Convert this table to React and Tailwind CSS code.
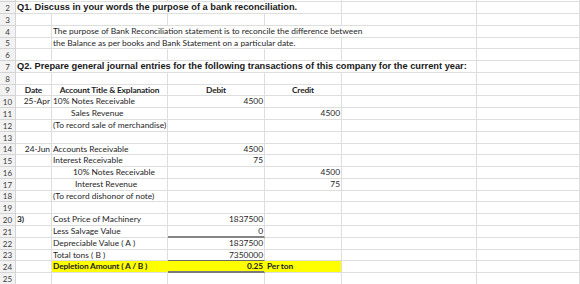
const GRID = 'grid grid-cols-[16px_36px_116px_97px_77px_135px_103px]';
const LINE = 'border-r border-b border-[#dedede]';

const Q = "font-[family-name:'Liberation_Sans',Arial,sans-serif] font-bold text-[9.25px] text-[#1a1a1a] pl-[1px]";
const B = 'font-bold tracking-[-0.15px]';

function Cell({ span = '', className = '', children }) {
    return (
        <div className={`${span} ${LINE} flex items-center whitespace-nowrap overflow-visible ${className}`}>
            {children}
        </div>
    );
}

function Row({ n, h, children }) {
    return (
        <div className={`${GRID} ${h}`}>
            <div className="bg-[#f2f2f2] border-r border-b border-[#d4d4d4] flex items-center justify-center text-[8px] text-[#3a3a3a]">
                {n}
            </div>
            {children}
        </div>
    );
}

// empty cells for the rest of a row
const Blank = ({ count }) => Array.from({ length: count }).map((_, i) => <Cell key={i} />);

const App = () => {
    return (
        <div className="w-[580px] h-[284px] overflow-hidden bg-white font-[family-name:Lato,sans-serif] text-[8.4px] text-[#1e1e1e] leading-none">
            <div className={`${GRID} h-[2px]`}>
                <div className="bg-[#f2f2f2] border-r border-b border-[#d4d4d4]" />
                <Blank count={6} />
            </div>

            <Row n={2} h="h-[12px]">
                <Cell span="col-span-4" className={Q}>Q1. Discuss in your words the purpose of a bank reconciliation.</Cell>
                <Blank count={2} />
            </Row>
            <Row n={3} h="h-[12px]"><Blank count={6} /></Row>
            <Row n={4} h="h-[12px]">
                <Cell />
                <Cell span="col-span-4" className="pl-[1px]">The purpose of Bank Reconciliation statement is to reconcile the difference between</Cell>
                <Cell />
            </Row>
            <Row n={5} h="h-[11px]">
                <Cell />
                <Cell span="col-span-3" className="pl-[1px]">the Balance as per books and Bank Statement on a particular date.</Cell>
                <Blank count={2} />
            </Row>
            <Row n={6} h="h-[12px]"><Blank count={6} /></Row>
            <Row n={7} h="h-[12px]">
                <Cell span="col-span-5" className={Q}>Q2. Prepare general journal entries for the following transactions of this company for the current year:</Cell>
                <Cell />
            </Row>
            <Row n={8} h="h-[12px]"><Blank count={6} /></Row>
            <Row n={9} h="h-[11px]">
                <Cell className={`justify-center ${B}`}>Date</Cell>
                <Cell className={`justify-center ${B}`}>Account Title &amp; Explanation</Cell>
                <Cell className={`justify-center ${B}`}>Debit</Cell>
                <Cell className={`justify-center ${B}`}>Credit</Cell>
                <Blank count={2} />
            </Row>
            <Row n={10} h="h-[12px]">
                <Cell className="justify-end pr-[1px]">25-Apr</Cell>
                <Cell className="pl-[1px]">10% Notes Receivable</Cell>
                <Cell className="justify-end pr-[1px]">4500</Cell>
                <Blank count={3} />
            </Row>
            <Row n={11} h="h-[12px]">
                <Cell />
                <Cell className="pl-[19px]">Sales Revenue</Cell>
                <Cell />
                <Cell className="justify-end pr-[1px]">4500</Cell>
                <Blank count={2} />
            </Row>
            <Row n={12} h="h-[12px]">
                <Cell />
                <Cell className="pl-[1px]">(To record sale of merchandise)</Cell>
                <Blank count={4} />
            </Row>
            <Row n={13} h="h-[12px]"><Blank count={6} /></Row>
            <Row n={14} h="h-[11px]">
                <Cell className="justify-end pr-[1px]">24-Jun</Cell>
                <Cell className="pl-[1px]">Accounts Receivable</Cell>
                <Cell className="justify-end pr-[1px]">4500</Cell>
                <Blank count={3} />
            </Row>
            <Row n={15} h="h-[12px]">
                <Cell />
                <Cell className="pl-[1px]">Interest Receivable</Cell>
                <Cell className="justify-end pr-[1px]">75</Cell>
                <Blank count={3} />
            </Row>
            <Row n={16} h="h-[12px]">
                <Cell />
                <Cell className="pl-[21px]">10% Notes Receivable</Cell>
                <Cell />
                <Cell className="justify-end pr-[1px]">4500</Cell>
                <Blank count={2} />
            </Row>
            <Row n={17} h="h-[12px]">
                <Cell />
                <Cell className="pl-[23px]">Interest Revenue</Cell>
                <Cell />
                <Cell className="justify-end pr-[1px]">75</Cell>
                <Blank count={2} />
            </Row>
            <Row n={18} h="h-[11px]">
                <Cell />
                <Cell className="pl-[1px]">(To record dishonor of note)</Cell>
                <Blank count={4} />
            </Row>
            <Row n={19} h="h-[12px]"><Blank count={6} /></Row>
            <Row n={20} h="h-[12px]">
                <Cell className={`pl-[1px] ${B}`}>3)</Cell>
                <Cell className="pl-[1px]">Cost Price of Machinery</Cell>
                <Cell className="justify-end pr-[1px]">1837500</Cell>
                <Blank count={3} />
            </Row>
            <Row n={21} h="h-[12px]">
                <Cell />
                <Cell className="pl-[1px]">Less Salvage Value</Cell>
                <Cell className="justify-end pr-[1px] border-b-2 border-b-[#858585]">0</Cell>
                <Blank count={3} />
            </Row>
            <Row n={22} h="h-[12px]">
                <Cell />
                <Cell className="pl-[1px]">Depreciable Value ( A )</Cell>
                <Cell className="justify-end pr-[1px]">1837500</Cell>
                <Blank count={3} />
            </Row>
            <Row n={23} h="h-[11px]">
                <Cell />
                <Cell className="pl-[1px]">Total tons ( B )</Cell>
                <Cell className="justify-end pr-[1px] border-b-[#6a6a6a]">7350000</Cell>
                <Blank count={3} />
            </Row>
            <Row n={24} h="h-[12px]">
                <Cell />
                <Cell className={`pl-[1px] ${B} bg-[#ffff00] border-r-[#ffff00]`}>Depletion Amount ( A / B )</Cell>
                <Cell className={`justify-end pr-[1px] ${B} bg-[#ffff00] border-r-[#ffff00] border-b-2 border-b-[#7a7a7a]`}>0.25</Cell>
                <Cell className={`pl-[2px] ${B} bg-[#ffff00]`}>Per ton</Cell>
                <Blank count={2} />
            </Row>
            <Row n={25} h="h-[12px]"><Blank count={6} /></Row>
        </div>
    );
};

export default App;
